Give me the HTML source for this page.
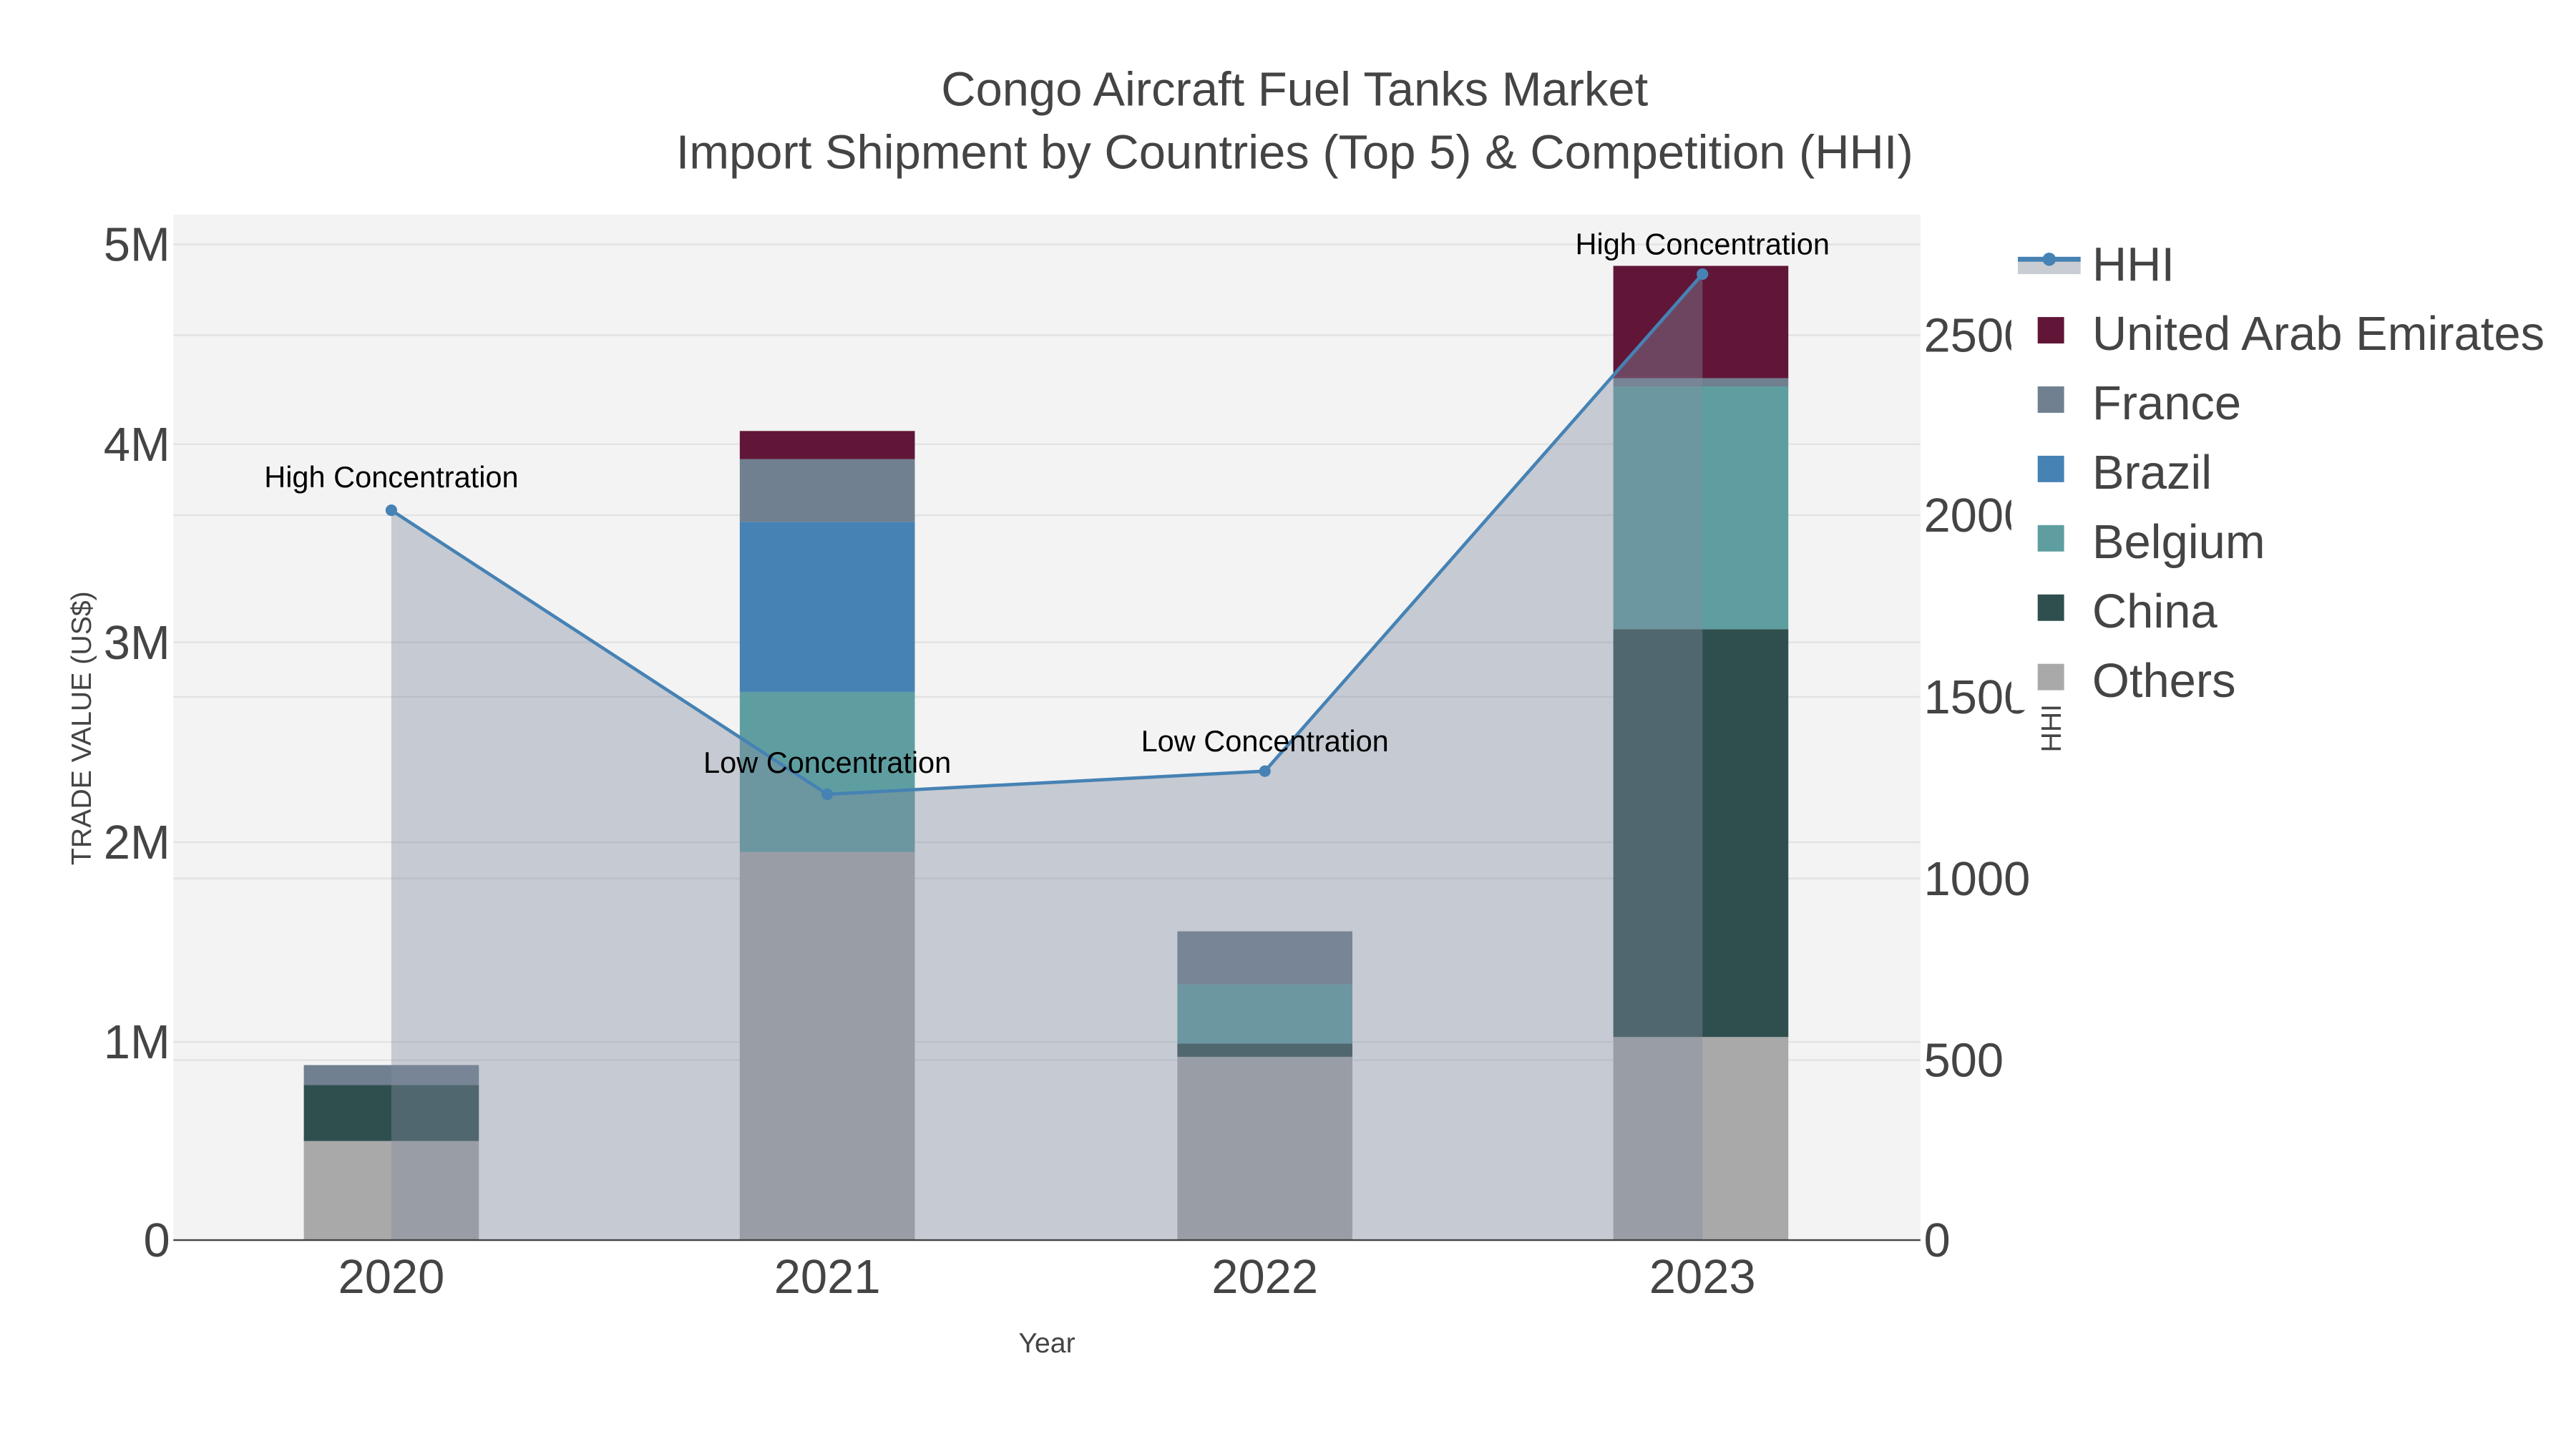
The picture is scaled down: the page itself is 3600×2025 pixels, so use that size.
<!DOCTYPE html>
<html><head><meta charset="utf-8"><style>
html,body{margin:0;padding:0;background:#fff;}
svg{display:block;font-family:"Liberation Sans",Arial,sans-serif;}
</style></head><body>
<svg width="3600" height="2025" viewBox="0 0 1560 877.5" xmlns="http://www.w3.org/2000/svg">
<rect x="0" y="0" width="1560" height="877.5" fill="#fff"/>
<rect x="105" y="130" width="1058" height="621" fill="#f3f3f3"/>
<g stroke="#e2e2e2" stroke-width="1">
<line x1="105" x2="1163" y1="148" y2="148"/><line x1="105" x2="1163" y1="269" y2="269"/>
<line x1="105" x2="1163" y1="389" y2="389"/><line x1="105" x2="1163" y1="510" y2="510"/>
<line x1="105" x2="1163" y1="631" y2="631"/>
<line x1="105" x2="1163" y1="203" y2="203"/><line x1="105" x2="1163" y1="312" y2="312"/>
<line x1="105" x2="1163" y1="422" y2="422"/><line x1="105" x2="1163" y1="532" y2="532"/>
<line x1="105" x2="1163" y1="642" y2="642"/>
</g>
<g>
<rect x="184" y="691" width="106" height="60" fill="#a9a9a9"/>
<rect x="184" y="657" width="106" height="34" fill="#2f4f4f"/>
<rect x="184" y="645" width="106" height="12" fill="#708090"/>

<rect x="448" y="516" width="106" height="235" fill="#a9a9a9"/>
<rect x="448" y="419" width="106" height="97" fill="#5f9ea0"/>
<rect x="448" y="316" width="106" height="103" fill="#4682b4"/>
<rect x="448" y="278" width="106" height="38" fill="#708090"/>
<rect x="448" y="261" width="106" height="17" fill="#611638"/>

<rect x="713" y="640" width="106" height="111" fill="#a9a9a9"/>
<rect x="713" y="632" width="106" height="8" fill="#2f4f4f"/>
<rect x="713" y="596" width="106" height="36" fill="#5f9ea0"/>
<rect x="713" y="564" width="106" height="32" fill="#708090"/>

<rect x="977" y="628" width="106" height="123" fill="#a9a9a9"/>
<rect x="977" y="381" width="106" height="247" fill="#2f4f4f"/>
<rect x="977" y="234" width="106" height="147" fill="#5f9ea0"/>
<rect x="977" y="229" width="106" height="5" fill="#708090"/>
<rect x="977" y="161" width="106" height="68" fill="#611638"/>
</g>
<polygon points="237,751 237,309 501,481 766,467 1031,166 1031,751" fill="rgb(130,140,160)" fill-opacity="0.4"/>
<polyline points="237,309 501,481 766,467 1031,166" fill="none" stroke="#4682b4" stroke-width="2"/>
<g fill="#4682b4"><circle cx="237" cy="309" r="3.5"/><circle cx="501" cy="481" r="3.5"/><circle cx="766" cy="467" r="3.5"/><circle cx="1031" cy="166" r="3.5"/></g>
<line x1="105" x2="1163" y1="751" y2="751" stroke="#444" stroke-width="1"/>
<g font-size="18" fill="#000" text-anchor="middle">
<text x="237" y="295">High Concentration</text>
<text x="501" y="468">Low Concentration</text>
<text x="766" y="455">Low Concentration</text>
<text x="1031" y="154">High Concentration</text>
</g>
<g font-size="29" fill="#444" text-anchor="middle">
<text x="784" y="64">Congo Aircraft Fuel Tanks Market</text>
<text x="784" y="102">Import Shipment by Countries (Top 5) &amp; Competition (HHI)</text>
</g>
<g font-size="29" fill="#444" text-anchor="end">
<text x="103" y="158">5M</text><text x="103" y="279">4M</text><text x="103" y="399">3M</text>
<text x="103" y="520">2M</text><text x="103" y="641">1M</text><text x="103" y="761">0</text>
</g>
<g font-size="29" fill="#444" text-anchor="start">
<text x="1165" y="213">2500</text><text x="1165" y="322">2000</text><text x="1165" y="432">1500</text>
<text x="1165" y="542">1000</text><text x="1165" y="652">500</text><text x="1165" y="761">0</text>
</g>
<g font-size="29" fill="#444" text-anchor="middle">
<text x="237" y="783">2020</text><text x="501" y="783">2021</text><text x="766" y="783">2022</text><text x="1031" y="783">2023</text>
</g>
<text x="634" y="819" font-size="17" fill="#444" text-anchor="middle">Year</text>
<text transform="translate(55,441) rotate(-90)" font-size="17" fill="#444" text-anchor="middle">TRADE VALUE (US$)</text>
<rect x="1218" y="130" width="342" height="300" fill="#fff"/>
<text transform="translate(1248,441) rotate(-90)" font-size="17" fill="#444" text-anchor="middle">HHI</text>
<rect x="1222" y="157" width="38" height="9" fill="#c9cdd3"/>
<line x1="1222" x2="1260" y1="157" y2="157" stroke="#4682b4" stroke-width="3"/>
<circle cx="1241" cy="157" r="4" fill="#4682b4"/>
<g>
<rect x="1234" y="192" width="16" height="16" fill="#611638"/>
<rect x="1234" y="234" width="16" height="16" fill="#708090"/>
<rect x="1234" y="276" width="16" height="16" fill="#4682b4"/>
<rect x="1234" y="318" width="16" height="16" fill="#5f9ea0"/>
<rect x="1234" y="360" width="16" height="16" fill="#2f4f4f"/>
<rect x="1234" y="402" width="16" height="16" fill="#a9a9a9"/>
</g>
<g font-size="29" fill="#444">
<text x="1267" y="170">HHI</text>
<text x="1267" y="212">United Arab Emirates</text>
<text x="1267" y="254">France</text>
<text x="1267" y="296">Brazil</text>
<text x="1267" y="338">Belgium</text>
<text x="1267" y="380">China</text>
<text x="1267" y="422">Others</text>
</g>
</svg>
</body></html>
